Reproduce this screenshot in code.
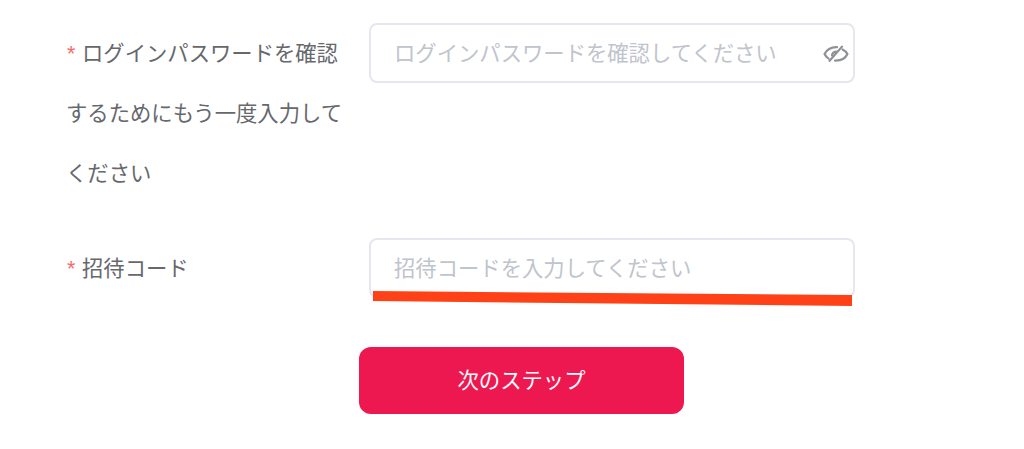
<div class="form">
  <div class="row">
    <div class="label"><span class="star">*</span>ログインパスワードを確認するためにもう一度入力してください</div>
    <div class="field">
      <input class="input" type="password" placeholder="ログインパスワードを確認してください" />
      <svg class="eye" viewBox="0 0 26 18" width="26" height="18" fill="none" stroke="#8f9196" stroke-width="2.2" stroke-linecap="round" aria-hidden="true">
        <path d="M14 2.2C8 1.8 3.2 5 1.6 9c.8 1.9 2 3.3 4 4.6" />
        <path d="M6.6 15.8 19 1.6" />
        <path d="M19.6 4.4c2.4 1.2 4 2.8 4.8 4.6-1.8 4-6.4 6.8-12.4 6.6" />
        <path d="M9 10.4c.3-2 2-3.6 4-3.8" />
      </svg>
    </div>
  </div>
  <div class="row">
    <div class="label"><span class="star">*</span>招待コード</div>
    <div class="field">
      <input class="input" type="text" placeholder="招待コードを入力してください" />
      <svg class="mark" viewBox="0 0 480 16" width="480" height="16" aria-hidden="true">
        <polygon points="0,0 479,4 479,15 0,10" fill="#ff4117" />
      </svg>
    </div>
  </div>
  <button class="next" type="button">次のステップ</button>
</div>

<style>
  :global(body) {
    margin: 0;
    background: #fff;
  }
  .form {
    padding: 23px 0 35px 66px;
    font-family: "Noto Sans CJK JP", "Noto Sans", sans-serif;
    box-sizing: border-box;
  }
  .row {
    display: flex;
    gap: 27px;
    margin-bottom: 35px;
  }
  .row + .row {
    margin-bottom: 49px;
  }
  .label {
    width: 276px;
    height: 180px;
    font-size: 21.33px;
    line-height: 60px;
    color: #66686c;
    flex: none;
    transform: translateY(-1px);
  }
  .row + .row .label {
    height: 60px;
  }
  .star {
    display: inline-block;
    width: 16px;
    padding-left: 1px;
    box-sizing: border-box;
    line-height: 0;
    color: #f56c6c;
    font-family: "Liberation Sans", sans-serif;
    font-size: 21.33px;
  }
  .field {
    position: relative;
    width: 486px;
    height: 60px;
  }
  .input {
    width: 100%;
    height: 100%;
    box-sizing: border-box;
    border: 2px solid #e6e7ee;
    border-radius: 8px;
    padding: 0 70px 4px 23px;
    background: #fff;
    font: inherit;
    font-size: 21.33px;
    outline: none;
    color: #606266;
  }
  .input::placeholder {
    color: #c0c4cc;
    opacity: 1;
  }
  .eye {
    position: absolute;
    right: 6px;
    top: 22px;
  }
  .mark {
    position: absolute;
    left: 4px;
    top: 53px;
  }
  .next {
    display: block;
    margin-left: 293px;
    width: 325px;
    height: 67px;
    border: 0;
    border-radius: 12px;
    padding: 0 0 4px;
    background: #ee1850;
    color: #fff;
    font: inherit;
    font-size: 21.33px;
  }
</style>
